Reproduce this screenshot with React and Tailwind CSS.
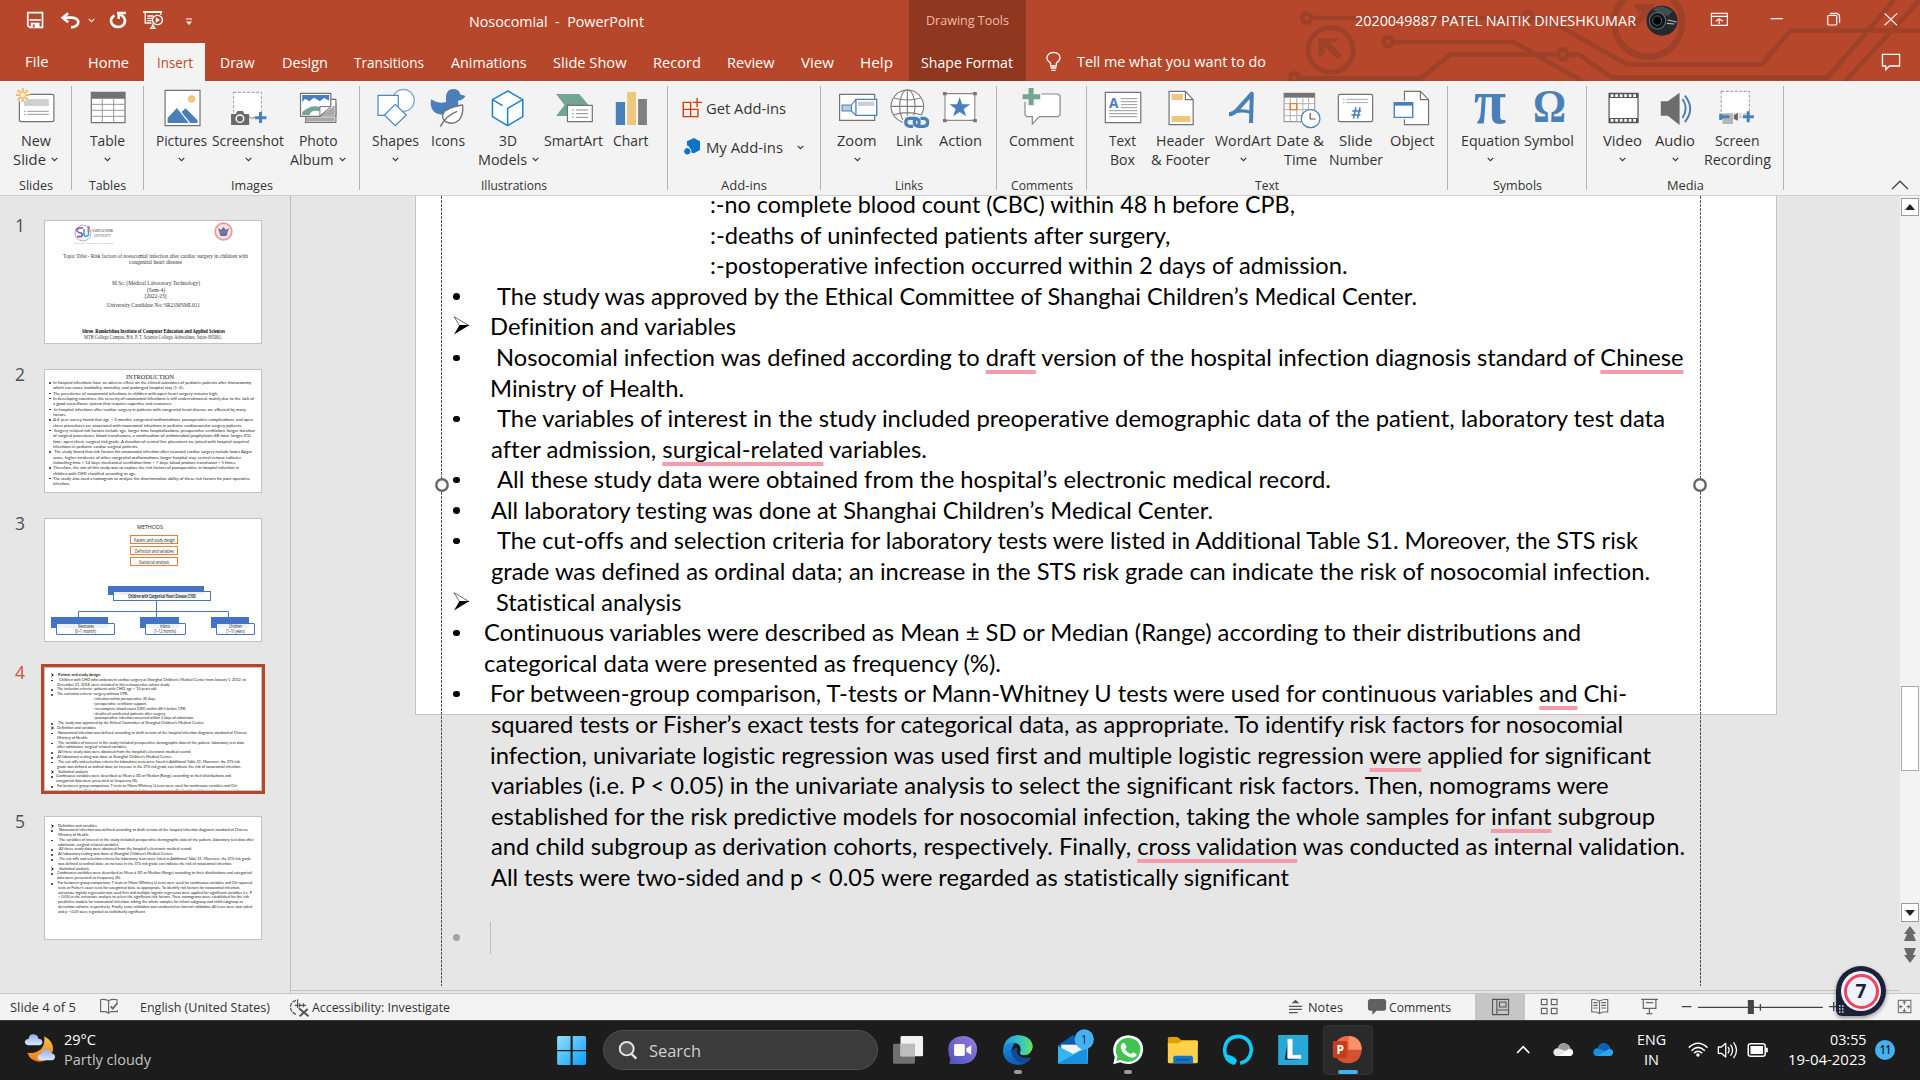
import React, { useLayoutEffect, useRef } from "react";

/* Drawing grids for the icons: [origin x, origin y, horizontal units per pixel]; 3 vertical units per pixel. */
const GRID = {
  a: [0, 0, 2.3758],
  b: [660, 0, 2.45],
  c: [1280, 0, 2.45],
  s: [0, 980, 2.3758],
  k: [540, 980, 1.8667],
  r: [1240, 900, 2.3059],
};

function Icon({ g, x, y, w, h, className = "", children }) {
  const [ox, oy, s] = GRID[g];
  return (
    <svg
      width={w}
      height={h}
      viewBox={`${(x - ox) * s} ${(y - oy) * 3} ${w * s} ${h * 3}`}
      preserveAspectRatio="none"
      fill="none"
      className={"shrink-0 overflow-visible [&_*]:[vector-effect:non-scaling-stroke] " + className}
    >
      {children}
    </svg>
  );
}

/* A run of text set to an exact width. */
function T({ w, className = "", children }) {
  const ref = useRef(null);
  useLayoutEffect(() => {
    const el = ref.current;
    el.style.transform = "none";
    const natural = el.getBoundingClientRect().width;
    if (natural > 0) el.style.transform = `scaleX(${w / natural})`;
  });
  return (
    <span className={"inline-block shrink-0 whitespace-pre text-left " + className} style={{ width: w }}>
      <span ref={ref} className="inline-block origin-left whitespace-pre">{children}</span>
    </span>
  );
}

const Chev = ({ className = "" }) => (
  <svg width="7" height="5" viewBox="0 0 7 5" fill="none" stroke="currentColor" strokeWidth="1.1" className={"shrink-0 " + className}>
    <path d="M.7 .8 3.5 3.6 6.3 .8" />
  </svg>
);

/* ---------- header ---------- */

function Circuit() {
  return (
    <Icon g="c" x={1280} y={0} w={640} h={81} className="absolute right-0 top-0 overflow-hidden!">
      <g stroke="#9d4129" strokeWidth="4.6">
        <ellipse cx="65" cy="54" rx="11" ry="14" />
        <path d="M78 54H590M608 54 650 54 850 193H1180L1250 92H1568" />
        <ellipse cx="608" cy="50" rx="11" ry="13" />
        <ellipse cx="265" cy="125" rx="11" ry="14" />
        <path d="M278 126H572L740 243" />
        <ellipse cx="35" cy="234" rx="11" ry="14" />
        <path d="M48 235H345L418 163H680M706 163H732L812 232H1342L1505 0M1385 243 1568 0" />
        <ellipse cx="693" cy="163" rx="12" ry="15" />
        <ellipse cx="124" cy="150" rx="55" ry="67" strokeWidth="5" />
        <ellipse cx="902" cy="68" rx="83" ry="102" strokeWidth="6.5" />
      </g>
      <path d="M94 115H146L136 127H122L151 165 141 178 110 140V158L94 176Z" fill="#9d4129" />
      <path d="M865 12H916V82L898 65V50L868 90 858 76 886 36H876Z" fill="#9d4129" />
    </Icon>
  );
}

const TABS = [
  ["File", "w-[73px]", 23.5],
  ["Home", "w-[71px]", 41],
  ["Insert", "w-[61px]", 36],
  ["Draw", "w-[64px]", 34.5],
  ["Design", "w-[71px]", 46],
  ["Transitions", "w-[98px]", 70],
  ["Animations", "w-[101px]", 75.5],
  ["Slide Show", "w-[101px]", 73.5],
  ["Record", "w-[73px]", 48],
  ["Review", "w-[75px]", 47.5],
  ["View", "w-[58px]", 33],
  ["Help", "w-[60px]", 33],
];

function Header() {
  return (
    <header className="relative h-[81px] w-full shrink-0 bg-[#b7472a] text-[14px] leading-5 text-white">
      <Circuit />
      <div className="relative flex h-[43px] items-start">
        <div className="flex w-[469px] items-start pl-[23px] pt-2 text-[#fbeae5]">
          <Icon g="a" x={23} y={8} w={24} h={24}>
            <path d="M66 38H101V82H71L66 77Z" stroke="#fff" strokeWidth="1.7" />
            <path d="M70 60H97" stroke="#fff" strokeWidth="1.6" />
            <path d="M73 68H94V83H73Z" fill="#fff" />
            <path d="M78 73H82V83H78Z" fill="#b7472a" />
          </Icon>
          <Icon g="a" x={58} y={8} w={24} h={24} className="ml-[11px]">
            <path d="M150 53H172Q186 55 186 67 185 80 169 82" stroke="#fff" strokeWidth="2.6" />
            <path d="M162 40 149 53 162 67" stroke="#fff" strokeWidth="2.6" />
          </Icon>
          <Chev className="ml-[6px] mt-[10px]" />
          <Icon g="a" x={106} y={8} w={24} h={24} className="ml-[11px]">
            <path d="M272 46Q262 54 264 66 268 81 281 81 296 80 297 62 296 50 286 44" stroke="#fff" strokeWidth="2.6" />
            <path d="M278 39H299M282 39V57" stroke="#fff" strokeWidth="2.4" />
          </Icon>
          <Icon g="a" x={141} y={8} w={24} h={24} className="ml-[11px]">
            <path d="M340 36H385" stroke="#fff" strokeWidth="2" />
            <path d="M345 36V69H360M350 48H364M350 55H361M350 62H360M382 36V44M356 85H370M360 84 363 74 367 84" stroke="#fff" strokeWidth="1.3" />
            <ellipse cx="374" cy="60" rx="12" ry="14" stroke="#fff" strokeWidth="1.4" />
            <path d="M370 52 380 60 370 68Z" fill="#fff" />
          </Icon>
          <svg width="8" height="8" viewBox="0 0 8 8" className="ml-[20px] mt-[10px]">
            <path d="M1 .5H7V1.6H1ZM1 3.6H7L4 7Z" fill="#fff" />
          </svg>
        </div>
        <T w={175} className="mt-[12px]">{"Nosocomial  -  PowerPoint"}</T>
        <div className="ml-auto flex h-full w-[117px] shrink-0 justify-center bg-[#903720]">
          <T w={83} className="mt-[11px] text-[12.5px] text-[#f3b9a8]">Drawing Tools</T>
        </div>
        <div className="flex w-[894px] shrink-0 items-start pl-[329px]">
          <T w={281} className="mt-[11px]">2020049887 PATEL NAITIK DINESHKUMAR</T>
          <Icon g="c" x={1647} y={6} w={31} h={30} className="ml-[11px] mt-[6px]">
            <ellipse cx="936" cy="62" rx="38" ry="45" fill="#23292d" />
            <path d="M912 30Q935 8 962 34L950 48Z" fill="#434c51" />
            <ellipse cx="925" cy="62" rx="20" ry="25" fill="#11161a" stroke="#5e696e" strokeWidth="1.2" />
            <ellipse cx="924" cy="62" rx="11" ry="14" fill="#000" stroke="#566" strokeWidth="1" />
            <path d="M950 60 972 66M948 70 966 72" stroke="#b7bcb6" strokeWidth="1.2" />
          </Icon>
          <Icon g="c" x={1709} y={10} w={21} h={20} className="ml-[31px] mt-[10px]">
            <path d="M1057 40H1096V76H1057ZM1057 49H1096M1076 72V56M1068 64 1076 56 1085 64" stroke="#fff" strokeWidth="1.2" />
          </Icon>
          <Icon g="c" x={1767} y={10} w={20} h={20} className="ml-[37px] mt-[10px]">
            <path d="M1202 56H1232" stroke="#fff" strokeWidth="1.2" />
          </Icon>
          <Icon g="c" x={1823} y={10} w={20} h={20} className="ml-[36px] mt-[10px]">
            <rect x="1342" y="46" width="22" height="29" rx="3" stroke="#fff" strokeWidth="1.2" />
            <path d="M1348 40H1362Q1371 40 1371 52V68" stroke="#fff" strokeWidth="1.2" />
          </Icon>
          <Icon g="c" x={1881} y={10} w={20} h={20} className="ml-[38px] mt-[10px]">
            <path d="M1481 40 1512 76M1512 40 1481 76" stroke="#fff" strokeWidth="1.2" />
          </Icon>
        </div>
      </div>
      <nav className="relative flex h-[38px] items-center">
        {TABS.map(([t, cls, w]) => (
          <div key={t} className={"flex h-full shrink-0 items-center justify-center " + cls + (t === "Insert" ? " bg-[#f3f3f3] text-[#c0482a]" : "")}>
            <T w={w} className={t === "File" ? "-mt-px" : "mt-px"}>{t}</T>
          </div>
        ))}
        <div className="ml-[3px] flex h-full w-[117px] shrink-0 items-center justify-center bg-[#903720]">
          <T w={92} className="-ml-[2px] mt-px">Shape Format</T>
        </div>
        <Icon g="b" x={1044} y={50} w={20} h={24} className="ml-[18px]">
          <path d="M957 198V190Q947 180 948 173 950 158 964 157 979 158 980 173 980 181 971 190V198ZM957 204H971M959 211H969" stroke="#fff" strokeWidth="1.3" />
        </Icon>
        <T w={189} className="-mt-px ml-[13px]">Tell me what you want to do</T>
        <Icon g="c" x={1881} y={50} w={21} h={24} className="ml-auto mr-[18px]">
          <path d="M1476 163H1518V198H1493L1484 209V198H1476Z" stroke="#fff" strokeWidth="1.3" />
        </Icon>
      </nav>
    </header>
  );
}

/* ---------- ribbon ---------- */

const B = "#4a80ba";
const G = "#737373";

const ICONS = {
  newSlide: (
    <>
      <rect x="46" y="283" width="82" height="82" rx="5" fill="#fff" stroke={G} strokeWidth="1.2" />
      <path d="M57 297H116V318H57Z" fill="#d0d0d0" />
      <path d="M57 334H61M65 334H116M57 343H61M65 343H116" stroke="#9a9a9a" strokeWidth="1" />
      <path d="M54 264V304M38 285H71M42 270 66 300M66 270 42 300" stroke="#f3f3f3" strokeWidth="4" />
      <path d="M54 264V279M54 291V306M38 285H49M59 285H71M42 270 50 280M58 290 66 300M66 270 58 280M50 290 42 300" stroke="#eebf68" strokeWidth="2" />
    </>
  ),
  table: (
    <>
      <path d="M217 277H297V368H217Z" fill="#fff" stroke={G} strokeWidth="1.2" />
      <path d="M217 276H297V296H217Z" fill={G} />
      <path d="M217 313H297M217 331H297M217 349H297M243 297V367M270 297V367" stroke="#9b9b9b" strokeWidth="1" />
    </>
  ),
  pictures: (
    <>
      <path d="M391 271H474V377H391Z" fill="#fff" stroke={G} strokeWidth="1.2" />
      <ellipse cx="454" cy="297" rx="9" ry="11" fill="#eec77d" />
      <path d="M397 354 419 324 447 369H397ZM430 336 440 325 468 361V369H451Z" fill={B} />
    </>
  ),
  screenshot: (
    <>
      <path d="M555 277H621V352H555Z" fill="#fff" stroke="#a9a9a9" strokeWidth="1.1" strokeDasharray="3 1.5" />
      <path d="M549 342H560L564 333H577L581 342H592V375H549Z" fill="#6a6a6a" />
      <ellipse cx="570" cy="356" rx="9" ry="11" fill="#6a6a6a" stroke="#fff" strokeWidth="1.4" />
      <path d="M596 355H603" stroke="#999" />
      <path d="M619 336V369M606 353H633" stroke={B} strokeWidth="3" />
    </>
  ),
  album: (
    <>
      <path d="M726 310H798V367H726Z" fill="#fff" stroke={G} strokeWidth="1.1" />
      <path d="M726 352H795V364H726Z" fill="#a8a8a8" />
      <path d="M722 298H798V348H722Z" fill="#fff" stroke={G} strokeWidth="1.1" />
      <path d="M764 346 795 316V346Z" fill="#a8a8a8" />
      <path d="M714 280H786V318L760 349H714Z" fill="#fff" stroke={G} strokeWidth="1.2" />
      <path d="M718 285H782V302L770 294 760 304 746 293 735 304 725 296 718 306Z" fill={B} />
      <path d="M718 336Q740 312 762 322L758 334Q740 328 735 345H718Z" fill="#72a592" />
      <path d="M760 348V320H786Z" fill="#fff" stroke={G} strokeWidth="1" />
    </>
  ),
  shapes: (
    <>
      <ellipse cx="957" cy="301" rx="26" ry="33" fill="#fff" stroke="#7aa3cf" strokeWidth="1.2" />
      <path d="M897 286H945V346H897Z" fill="#fff" stroke="#4a86c8" strokeWidth="1.2" />
      <path d="M938 313 964 345 938 377 912 345Z" fill="#fff" stroke="#4a86c8" strokeWidth="1.2" />
    </>
  ),
  icons: (
    <>
      <path d="M1024 298Q1041 313 1060 306 1056 267 1078 267 1092 268 1093 283L1106 288Q1100 301 1088 302 1093 325 1074 336 1056 350 1036 340 1020 327 1024 298Z" fill={B} />
      <path d="M1099 315Q1102 344 1090 361 1077 376 1058 365 1045 349 1057 333 1072 320 1099 315Z" fill="#fff" stroke={G} strokeWidth="1.3" />
      <path d="M1086 334Q1060 346 1046 380" stroke={G} strokeWidth="1.5" />
    </>
  ),
  models: (
    <path d="M1206 273 1242 299V350L1206 377 1170 350V299ZM1206 377V325L1242 299M1170 299 1194 317" fill="#fff" stroke="#1f7fd0" strokeWidth="1.5" />
  ),
  smartart: (
    <>
      <path d="M1320 282H1375L1397 315 1375 348H1320L1340 315Z" fill="#72a592" />
      <path d="M1347 316H1406V365H1347Z" fill="#fff" stroke={G} strokeWidth="1.2" />
      <path d="M1358 330H1362M1367 330H1396M1358 341H1362M1367 341H1396M1358 352H1362M1367 352H1396" stroke="#8a8a8a" strokeWidth="1" />
    </>
  ),
  chart: (
    <>
      <path d="M1463 306H1485V375H1463Z" fill={B} />
      <path d="M1490 276H1511V375H1490Z" fill="#eec77d" />
      <path d="M1516 297H1537V375H1516Z" fill="#808080" />
    </>
  ),
  zoom: (
    <>
      <path d="M440 283H526V361H440Z" fill="#fff" stroke={G} strokeWidth="1.2" />
      <path d="M446 315H469V333H446ZM469 315 480 298M469 333 480 346" fill="#b9cde3" stroke={B} strokeWidth="1.1" />
      <path d="M480 298H531V346H480Z" fill="#fff" stroke={B} strokeWidth="1.3" />
      <path d="M485 305H525V318H485Z" fill="#cfcfcf" />
    </>
  ),
  link: (
    <>
      <g stroke="#7d7d7d" strokeWidth="1.1">
        <ellipse cx="606" cy="319" rx="40" ry="49" fill="#fff" />
        <ellipse cx="606" cy="319" rx="19" ry="49" />
        <path d="M566 319H646M606 270V368M573 294Q606 306 639 294M573 344Q606 332 639 344" />
      </g>
      <rect x="595" y="346" width="67" height="42" rx="16" fill="#f3f3f3" />
      <g stroke={B} strokeWidth="3.2">
        <path d="M620 379H612Q602 378 602 367 602 355 612 355H625Q635 356 635 367 635 372 633 376" />
        <path d="M638 355H646Q656 356 656 367 656 379 646 379H633Q623 378 623 367 623 362 625 358" />
      </g>
    </>
  ),
  action: (
    <>
      <path d="M697 281H770V361H697Z" fill="#fff" stroke="#8a8a8a" strokeWidth="1.1" />
      <path d="M692 276H701V286H692ZM766 276H775V286H766ZM692 357H701V367H692ZM766 357H775V367H766Z" fill="#777" />
      <path d="M733 291 739 313H759L743 327 749 349 733 336 717 349 723 327 708 313H727Z" fill={B} />
    </>
  ),
  comment: (
    <>
      <path d="M893 282H974L979 288V344L974 350H928L911 372V350H898L893 344Z" fill="#fff" stroke="#8a8a8a" strokeWidth="1.2" />
      <path d="M884 278H933V305H920V318H896V305H884Z" fill="#f3f3f3" />
      <path d="M908 264V315M887 290H930" stroke="#72a592" strokeWidth="5" />
    </>
  ),
  textbox: (
    <>
      <path d="M1091 277H1178V368H1091Z" fill="#fff" stroke={G} strokeWidth="1.2" />
      <text x="1100" y="324" fontSize="40" fontWeight="700" fill={B} textLength="23" lengthAdjust="spacingAndGlyphs">A</text>
      <path d="M1129 296H1169M1129 305H1169M1129 314H1169M1129 323H1169M1100 332H1169M1100 341H1169M1100 350H1169" stroke="#999" strokeWidth="1" />
    </>
  ),
  header: (
    <>
      <path d="M1246 274H1286L1305 299V374H1246Z" fill="#fff" stroke={G} strokeWidth="1.2" />
      <path d="M1286 274V299H1305" stroke={G} strokeWidth="1.2" />
      <path d="M1252 282H1280V300H1252ZM1252 348H1298V366H1252Z" fill="#eec77d" />
    </>
  ),
  wordart: (
    <>
      <path d="M1394 343Q1405 343 1413 331L1450 281 1448 369" stroke={B} strokeWidth="4" strokeLinejoin="round" />
      <path d="M1413 334Q1430 330 1448 337" stroke={B} strokeWidth="3.4" />
    </>
  ),
  date: (
    <>
      <path d="M10 280H85V365H10Z" fill="#fff" stroke="#9a9a9a" strokeWidth="1.1" />
      <path d="M10 279H85V293H10Z" fill={G} />
      <path d="M10 311H85M10 329H85M10 347H85M25 294V364M41 294V364M56 294V364M70 294V364" stroke="#b0b0b0" strokeWidth="1" />
      <path d="M25 311H41V329H25Z" fill="#fff" stroke="#e07b28" strokeWidth="1.4" />
      <ellipse cx="75" cy="356" rx="23" ry="27" fill="#fff" stroke={B} strokeWidth="1.2" />
      <path d="M74 339V357H87" stroke="#555" strokeWidth="1.2" />
    </>
  ),
  slidenum: (
    <>
      <rect x="143" y="283" width="84" height="82" rx="4" fill="#fff" stroke={G} strokeWidth="1.2" />
      <path d="M154 298H158M162 298H216M154 308H158M162 308H216" stroke="#aaa" strokeWidth="1" />
      <path d="M186 322 180 356M196 322 190 356M177 333H199M175 345H197" stroke={B} strokeWidth="1.6" />
    </>
  ),
  object: (
    <>
      <path d="M305 274H344L364 299V374H305Z" fill="#fff" stroke={G} strokeWidth="1.2" />
      <path d="M344 274V299H364" stroke={G} strokeWidth="1.2" />
      <path d="M275 302H331V358H275Z" fill="#f3f3f3" />
      <path d="M280 308H325V352H280Z" fill="#fff" stroke={B} strokeWidth="1.4" />
      <path d="M280 307H325V317H280Z" fill={B} />
    </>
  ),
  video: (
    <>
      <path d="M805 280H876V368H805Z" fill="#fff" stroke="#555" strokeWidth="1.2" />
      <path d="M805 280H876V294H805ZM805 354H876V368H805Z" fill="#555" />
      <path d="M809 287H874M809 361H874" stroke="#fff" strokeWidth="2.6" strokeDasharray="2.8 1.7" />
    </>
  ),
  audio: (
    <>
      <path d="M933 304H950L979 278V375L950 347H933Z" fill="#6d6d6d" />
      <path d="M986 297Q1002 324 986 354M992 287Q1018 327 992 366" stroke={B} strokeWidth="2" />
    </>
  ),
  screenrec: (
    <>
      <path d="M1081 274H1150V342H1081Z" fill="#fff" stroke="#a9a9a9" strokeWidth="1.1" strokeDasharray="3 1.5" />
      <path d="M1084 340H1110V372H1084Z" fill="#b5b5b5" />
      <path d="M1076 341H1081L1086 346H1101V355H1086L1081 360H1076Z" fill={B} />
      <path d="M1112 346 1122 339V362L1112 357Z" fill="#666" />
      <path d="M1125 351H1131" stroke="#999" />
      <path d="M1147 334V367M1134 350H1161" stroke={B} strokeWidth="3" />
    </>
  ),
};

const GROUPS = [
  { n: "Slides", nw: 34, cls: "w-[72px]", pad: "", items: [["newSlide", "a", 36, "w-[71px]", ["New", 30], ["Slide", 33], "side"]] },
  { n: "Tables", nw: 37, cls: "w-[72px]", pad: "", items: [["table", "a", 108, "w-[71px]", ["Table", 35], null, "down"]] },
  {
    n: "Images", nw: 42, cls: "w-[216px]", pad: "pl-2",
    items: [
      ["pictures", "a", 181.5, "w-[59px]", ["Pictures", 51], null, "down"],
      ["screenshot", "a", 248, "w-[74px]", ["Screenshot", 72], null, "down"],
      ["album", "a", 318, "w-[66px]", ["Photo", 38.5], ["Album", 43.5], "side"],
    ],
  },
  {
    n: "Illustrations", nw: 66, cls: "w-[308px]", pad: "pl-[7px]",
    items: [
      ["shapes", "a", 395.5, "w-[57px]", ["Shapes", 47], null, "down"],
      ["icons", "a", 448, "w-[48px]", ["Icons", 34], null, ""],
      ["models", "a", 508, "w-[72px]", ["3D", 18], ["Models", 49], "side"],
      ["smartart", "a", 573.5, "w-[59px]", ["SmartArt", 59], null, ""],
      ["chart", "a", 631, "w-[56px]", ["Chart", 35.5], null, ""],
    ],
  },
  { n: "Add-ins", nw: 46, cls: "w-[153px]", addins: true },
  {
    n: "Links", nw: 28, cls: "w-[176px]", pad: "pl-2",
    items: [
      ["zoom", "b", 857, "w-[56px]", ["Zoom", 39.5], null, "down"],
      ["link", "b", 909, "w-[48px]", ["Link", 26.5], null, ""],
      ["action", "b", 960.5, "w-[55px]", ["Action", 43], null, ""],
    ],
  },
  { n: "Comments", nw: 62, cls: "w-[90px]", pad: "", items: [["comment", "b", 1041.5, "w-[89px]", ["Comment", 65], null, ""]] },
  {
    n: "Text", nw: 24, cls: "w-[361px]", pad: "pl-[10px]",
    items: [
      ["textbox", "b", 1122, "w-[50px]", ["Text", 27], ["Box", 25], ""],
      ["header", "b", 1180.5, "w-[67px]", ["Header", 48.5], ["& Footer", 59], ""],
      ["wordart", "b", 1243, "w-[58px]", ["WordArt", 56], null, "down"],
      ["date", "c", 1300, "w-[56px]", ["Date &", 48], ["Time", 33], ""],
      ["slidenum", "c", 1356, "w-[56px]", ["Slide", 33.5], ["Number", 54], ""],
      ["object", "c", 1412, "w-[56px]", ["Object", 44.5], null, ""],
    ],
  },
  {
    n: "Symbols", nw: 49, cls: "w-[139px]", pad: "pl-[10px]",
    items: [
      ["π", "c", 1490, "w-[64px]", ["Equation", 59], null, "down"],
      ["Ω", "c", 1549, "w-[54px]", ["Symbol", 50], null, ""],
    ],
  },
  {
    n: "Media", nw: 37, cls: "w-[197px]", pad: "pl-2",
    items: [
      ["video", "c", 1622.5, "w-[55px]", ["Video", 39], null, "down"],
      ["audio", "c", 1675, "w-[50px]", ["Audio", 40], null, "down"],
      ["screenrec", "c", 1737, "w-[74px]", ["Screen", 44.5], ["Recording", 67], ""],
    ],
  },
];

function RibbonItem({ d }) {
  const [name, g, c, cls, l1, l2, chev] = d;
  return (
    <div className={"flex shrink-0 flex-col items-center pt-[2px] " + cls}>
      {ICONS[name] ? (
        <Icon g={g} x={c - 20} y={88} w={40} h={40}>{ICONS[name]}</Icon>
      ) : (
        <div className="flex h-10 items-center justify-center overflow-visible font-['Liberation_Serif',serif] font-bold text-[#4a80ba]">
          {name === "π" ? (
            <T w={32} className="-mt-[13px] text-[64px] leading-10">π</T>
          ) : (
            <T w={33} className="-mt-[5px] text-[47px] leading-10">Ω</T>
          )}
        </div>
      )}
      <T w={l1[1]} className="mt-[3px] leading-5">{l1[0]}</T>
      <div className="-mt-px flex h-5 items-center justify-center whitespace-nowrap leading-5">
        {l2 && <T w={l2[1]}>{l2[0]}</T>}
        {chev === "side" && <Chev className="ml-[5px] -mt-[1px]" />}
        {chev === "down" && <Chev className="-mt-[2px]" />}
      </div>
    </div>
  );
}

function AddIns() {
  return (
    <div className="flex h-[93px] shrink-0 flex-col pl-[12px] pt-[12px]">
      <div className="flex h-5 items-center">
        <Icon g="b" x={680} y={97} w={24} h={22}>
          <path d="M57 307H75V350H57ZM57 328H93V350H57M75 328V350M93 328V350" stroke="#d83b01" strokeWidth="1.4" />
          <path d="M91 294V321M80 307H103" stroke="#d83b01" strokeWidth="1.4" />
        </Icon>
        <T w={80} className="ml-[2px]">Get Add-ins</T>
      </div>
      <div className="mt-[19px] flex h-5 items-center">
        <Icon g="b" x={680} y={136} w={24} h={22}>
          <path d="M83 414 98 424V450L83 460 72 456V440L66 436V424Z" fill="#0a72c7" />
          <ellipse cx="67" cy="454" rx="9" ry="11" fill="#0a72c7" stroke="#f3f3f3" strokeWidth="1" />
        </Icon>
        <T w={77} className="ml-[2px]">My Add-ins</T>
        <Chev className="ml-[14px]" />
      </div>
    </div>
  );
}

function Ribbon() {
  return (
    <div className="flex h-[115px] shrink-0 border-b border-[#cfcfcf] bg-[#f3f3f3] pt-[5px] text-[14px] text-[#333]">
      {GROUPS.map((gr) => (
        <section key={gr.n} className={"flex h-[104px] shrink-0 flex-col border-r border-[#b4b4b4] " + gr.cls}>
          {gr.addins ? <AddIns /> : (
            <div className={"flex h-[93px] shrink-0 " + gr.pad}>
              {gr.items.map((d) => <RibbonItem key={d[0]} d={d} />)}
            </div>
          )}
          <div className="flex h-[14px] shrink-0 items-start justify-center text-[12.5px] leading-[14px]">
            <T w={gr.nw}>{gr.n}</T>
          </div>
        </section>
      ))}
      <svg width="18" height="10" viewBox="0 0 18 10" fill="none" stroke="#444" strokeWidth="1.3" className="ml-auto mr-[11px] mt-[94px]">
        <path d="M1 9 9 1.2 17 9" />
      </svg>
    </div>
  );
}

/* ---------- thumbnails ---------- */

function Lines({ lines, font, pitch }) {
  return lines.map(([x, w, t, b], i) => (
    <div key={i} className={"flex whitespace-pre " + font + " " + pitch}>
      <span className="w-[12px] shrink-0 pl-[6px]">
        {b === 1 && <span className="mt-[2px] block h-[1.500px] w-[1.500px] rounded-full bg-[#222]" />}
        {b === 2 && <svg width="3" height="4" viewBox="0 0 3 4" className="block"><path d="M0 0 3 2 0 4 1 2Z" fill="#111" /></svg>}
      </span>
      <span style={{ marginLeft: x - 12 }}><T w={w} className={t === "Patient and study design:" ? "font-bold" : ""}>{t}</T></span>
    </div>
  ));
}

const INTRO = [
  [10, 199, "In-hospital infections have an adverse effect on the clinical outcomes of pediatric patients after thoracotomy,", 1],
  [10, 131, "which can cause morbidity, mortality, and prolonged hospital stay [1–4]."],
  [10, 165, "The prevalence of nosocomial infections in children with open-heart surgery remains high.", 1],
  [10, 201, "In developing countries, the severity of nosocomial infections is still underestimated, mainly due to the lack of", 1],
  [10, 119, "a good surveillance system that requires expertise and resources."],
  [11, 192, "In-hospital infections after cardiac surgery in patients with congenital heart disease are affected by many", 1],
  [10, 13, "factors."],
  [10, 200, "A 4-year survey found that age < 2 months, congenital malformations, postoperative complications, and open", 1],
  [10, 189, "chest procedures are associated with nosocomial infections in pediatric cardiovascular surgery patients."],
  [11, 201, "Surgery-related risk factors include age, longer time hospitalizations, preoperative ventilation, longer duration", 1],
  [10, 198, "of surgical procedures, blood transfusions, a continuation of antimicrobial prophylaxis>48 hour, longer ICU"],
  [10, 196, "time, open chest, surgical risk grade. A duration of central line placement are joined with hospital-acquired"],
  [10, 85, "infections in pediatric cardiac surgical patients."],
  [11, 198, "The study found that risk factors for nosocomial infection after neonatal cardiac surgery include lower Apgar", 1],
  [10, 188, "score, higher incidence of other congenital malformations, longer hospital stay, central venous catheter"],
  [10, 183, "indwelling time > 14 days, mechanical ventilation time > 7 days, blood product transfusion > 5 times."],
  [10, 186, "Therefore, the aim of this study was to explore the risk factors of postoperative in-hospital infection in", 1],
  [10, 83, "children with CHD classified according to age."],
  [10, 197, "The study also used a nomogram to analyze the discrimination ability of these risk factors for post-operative", 1],
  [10, 17, "infection."],
];

const METHODS_TEXT = [
  [13, 43, "Patient and study design:", 2],
  [14, 187, "Children with CHD who underwent cardiac surgery at Shanghai Children’s Medical Center from January 1, 2012, to", 1],
  [12, 113, "December 31, 2018, were included in this retrospective cohort study."],
  [12, 100, "The inclusion criteria:- patients with CHD, age < 10 years old.", 1],
  [12, 71, "The exclusion criteria:-surgery without CPB,", 1],
  [48, 63, ":-infection within preoperative 30 days,"],
  [48, 54, ":-preoperative ventilator support,"],
  [48, 93, ":-no complete blood count (CBC) within 48 h before CPB,"],
  [48, 73, ":-deaths of uninfected patients after surgery,"],
  [48, 101, ":-postoperative infection occurred within 2 days of admission."],
  [13, 146, "The study was approved by the Ethical Committee of Shanghai Children’s Medical Center.", 1],
  [12, 39, "Definition and variables", 2],
  [13, 189, "Nosocomial infection was defined according to draft version of the hospital infection diagnosis standard of Chinese", 1],
  [12, 31, "Ministry of Health."],
  [13, 186, "The variables of interest in the study included preoperative demographic data of the patient, laboratory test data", 1],
  [12, 70, "after admission, surgical-related variables."],
  [13, 133, "All these study data were obtained from the hospital’s electronic medical record.", 1],
  [12, 115, "All laboratory testing was done at Shanghai Children’s Medical Center.", 1],
  [13, 182, "The cut-offs and selection criteria for laboratory tests were listed in Additional Table S1. Moreover, the STS risk", 1],
  [12, 184, "grade was defined as ordinal data; an increase in the STS risk grade can indicate the risk of nosocomial infection."],
  [13, 30, "Statistical analysis", 2],
  [11, 175, "Continuous variables were described as Mean ± SD or Median (Range) according to their distributions and", 1],
  [11, 82, "categorical data were presented as frequency (%)."],
  [12, 181, "For between-group comparison, T-tests or Mann-Whitney U tests were used for continuous variables and Chi-", 1],
  [12, 181, "squared tests or Fisher’s exact tests for categorical data, as appropriate. To identify risk factors for nosocomial"],
];

const LAST_TEXT = [
  [13, 39, "Definition and variables", 2],
  [14, 189, "Nosocomial infection was defined according to draft version of the hospital infection diagnosis standard of Chinese", 1],
  [13, 31, "Ministry of Health."],
  [14, 195, "The variables of interest in the study included preoperative demographic data of the patient, laboratory test data after", 1],
  [13, 61, "admission, surgical-related variables."],
  [14, 133, "All these study data were obtained from the hospital’s electronic medical record.", 1],
  [13, 115, "All laboratory testing was done at Shanghai Children’s Medical Center.", 1],
  [14, 192, "The cut-offs and selection criteria for laboratory tests were listed in Additional Table S1. Moreover, the STS risk grade", 1],
  [13, 174, "was defined as ordinal data; an increase in the STS risk grade can indicate the risk of nosocomial infection."],
  [14, 30, "Statistical analysis", 2],
  [12, 195, "Continuous variables were described as Mean ± SD or Median (Range) according to their distributions and categorical", 1],
  [12, 64, "data were presented as frequency (%)."],
  [13, 194, "For between-group comparison, T-tests or Mann-Whitney U tests were used for continuous variables and Chi-squared", 1],
  [13, 182, "tests or Fisher’s exact tests for categorical data, as appropriate. To identify risk factors for nosocomial infection,"],
  [13, 194, "univariate logistic regression was used first and multiple logistic regression were applied for significant variables (i.e. P"],
  [13, 191, "< 0.05) in the univariate analysis to select the significant risk factors. Then, nomograms were established for the risk"],
  [13, 185, "predictive models for nosocomial infection, taking the whole samples for infant subgroup and child subgroup as"],
  [13, 194, "derivation cohorts, respectively. Finally, cross validation was conducted as internal validation. All tests were two-sided"],
  [13, 87, "and p < 0.05 were regarded as statistically significant"],
];

function Thumb1() {
  return (
    <div className="flex h-full flex-col items-center font-['Liberation_Serif',serif] text-[#333]">
      <div className="flex w-full items-start justify-between pl-[29px] pr-[28px] pt-[1px]">
        <div className="mt-[2px] flex flex-col">
          <div className="flex items-center">
            <svg width="18" height="18" viewBox="0 0 18 18" fill="none">
              <circle cx="9" cy="9" r="8" stroke="#a9b3c2" strokeWidth="1" />
              <path d="M9 4H5Q2.500 4.500 3 7 4 9 7 9 9 10 8 12 6 13 3 12.500" stroke="#8a4bb8" strokeWidth="1.6" />
              <path d="M10 5V11Q12 14 14.500 11V2" stroke="#3aa9c9" strokeWidth="1.6" />
              <path d="M14.500 2V8" stroke="#e2607c" strokeWidth="1.6" />
            </svg>
            <div className="flex flex-col text-[4.200px] leading-[5px] text-[#666]">
              <T w={21} className="font-bold">SARVAJANIK</T>
              <T w={17} className="ml-[2px]">UNIVERSITY</T>
            </div>
          </div>
          <T w={40} className="text-[2.500px] leading-[4px] text-[#777]">INCLUSIVE | INTEGRATED | INNOVATIVE</T>
        </div>
        <svg width="19" height="19" viewBox="0 0 19 19">
          <circle cx="9.500" cy="9.500" r="8.400" fill="#f8e2e2" stroke="#e79a96" strokeWidth="1.600" />
          <path d="M4 6 7 8 9.500 5 12 8 15 6 12.500 14H6.500Z" fill="#5f6fa8" />
          <path d="M6 10H13" stroke="#d9706c" />
        </svg>
      </div>
      <div className="ml-[5px] mt-[7px] flex flex-col items-center text-[5.500px] leading-[6px]">
        <T w={185}>Topic Title:- Risk factors of nosocomial infection after cardiac surgery in children with</T>
        <T w={53}>congenital heart disease</T>
      </div>
      <div className="ml-[5px] mt-[15px] flex flex-col items-center text-[5.500px] leading-[6.500px]">
        <T w={88}>M.Sc. (Medical Laboratory Technology)</T>
        <T w={18}>(Sem-4)</T>
        <T w={22}>[2022-23]</T>
        <T w={93} className="mt-[2.500px] -ml-[5px]">University Candidate No: SR21MSML011</T>
      </div>
      <div className="mt-[19px] flex flex-col items-center text-[5.500px] leading-[6px]">
        <T w={143} className="font-bold text-black">Shree  Ramkrishna Institute of Computer Education and Applied Sciences</T>
        <T w={138}>MTB College Campus, B/h. P. T. Science College, Athwalines, Surat-395001,</T>
      </div>
    </div>
  );
}

function Thumb3() {
  const box = (cls, w1, t1, w2, t2, cls2) => (
    <div className={"relative h-[18px] " + cls}>
      <div className={"h-[11px] bg-[#4472c4] " + cls2} />
      <div className="absolute bottom-0 left-[5px] right-0 flex h-[12px] flex-col items-center justify-center rounded-[1px] border border-[#4472c4] bg-white/90 text-[4.500px] leading-[5px]">
        <T w={w1}>{t1}</T>
        <T w={w2}>{t2}</T>
      </div>
    </div>
  );
  return (
    <div className="flex h-full flex-col items-center text-[#222]">
      <T w={26} className="-ml-[6px] mt-[5px] text-[6px] leading-[6px]">METHODS</T>
      <div className="ml-[2px] mt-[5px] flex flex-col gap-[2px] text-[4.500px] leading-[4px]">
        {[["Patient and study design", 41], ["Definition and variables", 39], ["Statistical analysis", 30]].map(([t, w]) => (
          <div key={t} className="flex h-[9px] w-[48px] items-center justify-center border border-[#ed7d31]">
            <T w={w}>{t}</T>
          </div>
        ))}
      </div>
      <div className="relative ml-[13px] mt-[20px] h-[15px] w-[103px]">
        <div className="h-[9px] w-[96px] bg-[#4472c4]" />
        <div className="absolute bottom-0 right-0 flex h-[10px] w-[98px] items-center justify-center border border-[#4472c4] bg-white/90 text-[4.500px] font-bold leading-[4px]">
          <T w={68}>Children with Congenital Heart Disease (CHD)</T>
        </div>
      </div>
      <svg width="216" height="16" viewBox="0 0 216 16" fill="none" stroke="#4472c4" strokeWidth="1" className="shrink-0">
        <path d="M111.500 0V16M33.500 16V10.500H183.500V16" />
      </svg>
      <div className="flex w-[204px] justify-between">
        {box("w-[64px]", 16, "Neonates", 21, "(0–1 month)", "w-[57px]")}
        {box("-ml-px w-[46px]", 10, "Infants", 22, "(1–12 months)", "w-[39px]")}
        {box("w-[44px]", 13, "Children", 19, "(1–10 years)", "w-[38px]")}
      </div>
    </div>
  );
}

function Panel() {
  const frames = [
    <Thumb1 />,
    <div className="pt-[4px] font-['Lato',sans-serif] text-[#222]">
      <div className="flex justify-center pr-[6px] font-['Liberation_Serif',serif] text-[6px] leading-[6px]"><T w={48}>INTRODUCTION</T></div>
      <div className="-ml-[2px]"><Lines lines={INTRO} font="text-[4.200px]" pitch="leading-[5.330px]" /></div>
    </div>,
    <Thumb3 />,
    <div className="pt-[5px] font-['Lato',sans-serif] text-[#222]"><Lines lines={METHODS_TEXT} font="text-[3.900px]" pitch="leading-[4.830px]" /></div>,
    <div className="pt-[6.500px] font-['Lato',sans-serif] text-[#222]"><Lines lines={LAST_TEXT} font="text-[3.900px]" pitch="leading-[4.800px]" /></div>,
  ];
  return (
    <aside className="flex w-[291px] shrink-0 flex-col gap-[25px] border-r border-[#bdbdbd] pt-6">
      {frames.map((f, i) => (
        <div key={i} className="flex h-[124px] shrink-0">
          <div className={"-mt-[2px] w-[44px] shrink-0 pl-[15px] text-[18.500px] leading-[14px] " + (i === 3 ? "text-[#d0502f]" : "text-[#505050]")}>
            <T w={10}>{i + 1}</T>
          </div>
          <div className={"h-[124px] w-[218px] overflow-hidden border border-[#c3c3c3] bg-white " + (i === 3 ? "ring-[3px] ring-[#b7472a]" : "")}>{f}</div>
        </div>
      ))}
    </aside>
  );
}

/* ---------- slide ---------- */

const U = ({ children }) => (
  <span className="underline decoration-[#f49cab] decoration-[4px] underline-offset-[4px] [text-decoration-skip-ink:none]">{children}</span>
);

const BODY = [
  ["", 710, 585, ":-no complete blood count (CBC) within 48 h before CPB,"],
  ["", 710, 460.5, ":-deaths of uninfected patients after surgery,"],
  ["", 710, 637.5, ":-postoperative infection occurred within 2 days of admission."],
  ["•", 496.5, 920, "The study was approved by the Ethical Committee of Shanghai Children’s Medical Center."],
  [">", 490, 246, "Definition and variables"],
  ["•", 496, 1187.5, <>Nosocomial infection was defined according to <U>draft</U> version of the hospital infection diagnosis standard of <U>Chinese</U></>],
  ["", 490, 194, "Ministry of Health."],
  ["•", 496.5, 1168, "The variables of interest in the study included preoperative demographic data of the patient, laboratory test data"],
  ["", 490.5, 436, <>after admission, <U>surgical-related</U> variables.</>],
  ["•", 496.5, 834, "All these study data were obtained from the hospital’s electronic medical record."],
  ["•", 490.5, 722, "All laboratory testing was done at Shanghai Children’s Medical Center."],
  ["•", 496.5, 1141, "The cut-offs and selection criteria for laboratory tests were listed in Additional Table S1. Moreover, the STS risk"],
  ["", 490.5, 1159, "grade was defined as ordinal data; an increase in the STS risk grade can indicate the risk of nosocomial infection."],
  [">", 496, 185.5, "Statistical analysis"],
  ["•", 483.5, 1097, "Continuous variables were described as Mean ± SD or Median (Range) according to their distributions and"],
  ["", 483.5, 517, "categorical data were presented as frequency (%)."],
  ["•", 490, 1137, <>For between-group comparison, T-tests or Mann-Whitney U tests were used for continuous variables <U>and</U> Chi-</>],
  ["", 490.5, 1132, "squared tests or Fisher’s exact tests for categorical data, as appropriate. To identify risk factors for nosocomial"],
  ["", 490, 1161, <>infection, univariate logistic regression was used first and multiple logistic regression <U>were</U> applied for significant</>],
  ["", 490.5, 1117.5, "variables (i.e. P < 0.05) in the univariate analysis to select the significant risk factors. Then, nomograms were"],
  ["", 490.5, 1164, <>established for the risk predictive models for nosocomial infection, taking the whole samples for <U>infant</U> subgroup</>],
  ["", 490.5, 1194, <>and child subgroup as derivation cohorts, respectively. Finally, <U>cross validation</U> was conducted as internal validation.</>],
  ["", 490.5, 798, "All tests were two-sided and p < 0.05 were regarded as statistically significant"],
];

function Canvas() {
  return (
    <main className="relative h-[795px] w-[1609px] shrink-0 overflow-hidden border-b border-[#c3c3c3]">
      {/* slide sheet lying under the oversized text box */}
      <div className="absolute -top-[10px] left-[124px] h-[529px] w-[1362px] border border-[#c3c3c3] bg-white" />
      <div className="absolute left-[150px] top-0 h-[790px] w-[1259px]">
        <div className="-mt-[5.900px] font-['Lato',sans-serif] text-[22.600px] leading-[30.580px] text-black [font-variant-ligatures:none]">
          {BODY.map(([b, x, w, t], i) => (
            <div key={i} className="flex h-[30.580px]">
              <span className="flex w-[42px] shrink-0 items-start pl-[12px]">
                {b === "•" && <span className="mt-[11.500px] h-[6.500px] w-[6.500px] rounded-full bg-black" />}
                {b === ">" && (
                  <svg width="17" height="19" viewBox="0 0 17 19" className="mt-[4px]">
                    <path d="M1 .7 16 9.500 6.500 9.500Z" fill="#fff" stroke="#333" strokeWidth=".7" />
                    <path d="M6.500 9H16.500L1 18.500Z" fill="#000" />
                  </svg>
                )}
              </span>
              <span style={{ marginLeft: x - 483 }}><T w={w}>{t}</T></span>
            </div>
          ))}
          <div className="flex pl-[12px] pt-[29px]">
            <span className="mt-[12px] h-[7px] w-[7px] rounded-full bg-[#a3a3a3]" />
            <span className="ml-[30px] h-[32px] w-px bg-[#bdbdbd]" />
          </div>
        </div>
        <svg width="1259" height="790" className="absolute left-0 top-0 overflow-visible" fill="none" stroke="#555">
          <path d="M.5 0V790M1259.500 0V790" strokeDasharray="3 1" />
          <ellipse cx="1" cy="289" rx="5.700" ry="5.700" strokeWidth="2.400" fill="#fff" stroke="#666" />
          <ellipse cx="1259" cy="289" rx="5.700" ry="5.700" strokeWidth="2.400" fill="#fff" stroke="#666" />
        </svg>
      </div>
    </main>
  );
}

function Scrollbar() {
  return (
    <div className="flex w-5 shrink-0 flex-col items-center">
      <div className="flex h-[726px] w-full flex-col items-center bg-[#f3f3f3] pt-[2px]">
        <div className="flex h-[18px] w-[18px] items-center justify-center border border-[#9a9a9a] bg-white">
          <svg width="10" height="6" viewBox="0 0 10 6"><path d="M5 0 10 6H0Z" fill="#222" /></svg>
        </div>
        <div className="mt-[470px] h-[85px] w-[18px] border border-[#ababab] bg-white" />
        <div className="mt-auto flex h-[19px] w-[18px] items-center justify-center border border-[#9a9a9a] bg-white">
          <svg width="10" height="6" viewBox="0 0 10 6"><path d="M5 6 10 0H0Z" fill="#222" /></svg>
        </div>
      </div>
      <svg width="14" height="16" viewBox="0 0 14 16" className="mt-[4px] shrink-0"><path d="M7 0 13 8H10L13 15H1L4 8H1Z" fill="#696969" /></svg>
      <svg width="14" height="16" viewBox="0 0 14 16" className="mt-[5px] shrink-0"><path d="M7 16 13 8H10L13 1H1L4 8H1Z" fill="#696969" /></svg>
    </div>
  );
}

/* ---------- status bar ---------- */

function StatusBar() {
  return (
    <footer className="relative flex h-[27px] shrink-0 items-center border-t border-[#c6c6c6] bg-[#f3f3f3] text-[12px] leading-4 text-[#333]">
      <T w={66} className="ml-[10px] mt-[2px]">Slide 4 of 5</T>
      <Icon g="s" x={98} y={997} w={22} h={20} className="ml-[22px]">
        <path d="M258 62Q248 56 239 59V95H252L258 100 263 95H279V90M258 62V97M258 62Q266 56 278 59V68" stroke="#666" strokeWidth="1.1" />
        <path d="M263 79 268 86 279 69" stroke="#666" strokeWidth="1.800" />
      </Icon>
      <T w={130} className="ml-[20px] mt-[2px]">English (United States)</T>
      <Icon g="s" x={288} y={997} w={22} h={20} className="ml-[18px]">
        <path d="M703 61Q690 66 690 82 691 96 703 103" stroke="#555" strokeWidth="1.200" strokeDasharray="4 1" />
        <path d="M707 58V84M700 76H727M712 70V82M721 70V82" stroke="#555" strokeWidth="1.200" />
        <path d="M710 85 733 109M731 87 712 109" stroke="#555" strokeWidth="2" />
      </Icon>
      <T w={138} className="ml-[2px] mt-[2px]">Accessibility: Investigate</T>
      <div className="ml-auto flex h-full items-center">
        <Icon g="r" x={1287} y={997} w={17} h={20}>
          <path d="M128 299 137 310H119Z" fill="#555" />
          <path d="M113 319H143M113 328H143M113 338H133" stroke="#555" strokeWidth="1.100" />
        </Icon>
        <T w={35} className="ml-[4px] mt-[2px]">Notes</T>
        <Icon g="r" x={1367} y={997} w={20} h={20} className="ml-[24px]">
          <path d="M299 297H333L337 302V328L333 332H315L305 344V332H299L295 328V302Z" fill="#606060" />
        </Icon>
        <T w={62} className="ml-[2px] mt-[2px]">Comments</T>
        <div className="ml-[24px] flex h-full w-[50px] items-center justify-center bg-[#c6c6c6]">
          <Icon g="r" x={1490} y={997} w={19} h={20}>
            <path d="M580 298H617V344H580ZM590 298V344M590 330H617M596 306H611V321H596Z" stroke="#555" strokeWidth="1.100" />
          </Icon>
        </div>
        <Icon g="r" x={1540} y={997} w={19} h={20} className="ml-[15px]">
          <path d="M695 298H708V314H695ZM718 298H731V314H718ZM695 325H708V341H695ZM718 325H731V341H718Z" stroke="#666" strokeWidth="1.200" />
        </Icon>
        <Icon g="r" x={1590} y={997} w={19} h={20} className="ml-[31px]">
          <path d="M829 303Q818 297 811 299V336H822L829 341 836 336H848V299Q838 297 829 303V341M815 308H825M815 316H825M815 324H825M833 308H844M833 316H844M833 324H844" stroke="#666" strokeWidth="1.100" />
        </Icon>
        <Icon g="r" x={1640} y={997} w={19} h={20} className="ml-[31px]">
          <path d="M925 298H964M930 298V325H959V298M936 308H953M944 325V340M937 341H951" stroke="#666" strokeWidth="1.200" />
        </Icon>
        <Icon g="r" x={1680} y={997} w={160} h={20} className="ml-[21px]">
          <path d="M1019 320H1041M1056 322H1344M1200 312V332M1358 320H1380M1369 306V334" stroke="#444" strokeWidth="1.300" />
          <path d="M1171 300H1185V342H1171Z" fill="#444" />
        </Icon>
        <Icon g="r" x={1896} y={997} w={17} h={20} className="ml-[56px] mr-[7px]">
          <path d="M1518 301H1547V338H1518ZM1532 304V314M1532 325V335M1521 320H1528M1537 320H1544M1528 308 1532 304 1536 308M1528 331 1532 335 1536 331M1524 315 1521 320 1524 325M1541 315 1544 320 1541 325" stroke="#777" strokeWidth="1.100" />
        </Icon>
      </div>
      <div className="absolute -top-[28px] right-[34px] flex h-[50px] w-[50px] items-center justify-center rounded-[25px] rounded-bl-[6px] bg-[#1b2238] shadow-[0_2px_4px_rgba(0,0,0,.4)]">
        <div className="flex h-[40px] w-[40px] items-center justify-center rounded-full bg-[#f1f3fc]">
          <div className="flex h-[35px] w-[35px] items-center justify-center rounded-full border-[3px] border-[#f0415d] text-[19px] font-bold text-[#1b2238]">7</div>
        </div>
        <svg width="7" height="9" viewBox="0 0 7 9" className="absolute bottom-[2px] left-[2px]">
          <path d="M1 1H2.500M4 1H5.500M1 4H2.500M4 4H5.500M1 7H2.500M4 7H5.500" stroke="#dfe3f5" strokeWidth="1.300" />
        </svg>
      </div>
    </footer>
  );
}

/* ---------- taskbar ---------- */

function Taskbar() {
  return (
    <div className="flex h-[60px] shrink-0 items-start border-t border-[#3a3a3a] bg-[#1c1c1c] text-[14px] leading-5 text-white">
      <Icon g="s" x={24} y={1032} w={32} h={32} className="ml-[24px] mt-[11px]">
        <defs>
          <linearGradient id="moon" x1="0" y1="0" x2="0" y2="1"><stop stopColor="#f5c542" /><stop offset="1" stopColor="#ee7a1c" /></linearGradient>
          <linearGradient id="cl" x1="0" y1="0" x2="0" y2="1"><stop stopColor="#8fb0e8" /><stop offset="1" stopColor="#dbe8fb" /></linearGradient>
        </defs>
        <path d="M105 169Q128 184 126 211 120 244 94 245 72 244 65 218 84 222 97 208 108 193 105 169Z" fill="url(#moon)" />
        <path d="M67 196Q58 193 59 184 61 176 68 176 70 162 80 163 90 164 91 176 100 176 101 186 100 195 93 196Z" fill="url(#cl)" />
        <path d="M96 241Q88 238 89 230 91 222 97 222 100 208 110 208 119 209 121 220 130 221 131 230 130 240 123 241Z" fill="url(#cl)" />
      </Icon>
      <div className="ml-[8px] mt-[9px] flex w-[90px] flex-col">
        <T w={32}>29°C</T>
        <T w={87} className="text-[#c4c4c4]">Partly cloudy</T>
      </div>
      <Icon g="k" x={556} y={1035} w={31} h={31} className="ml-[402px] mt-[14px]">
        <defs><linearGradient id="win" x1="0" y1="0" x2="1" y2="1"><stop stopColor="#8fe3fd" /><stop offset="1" stopColor="#0a9cf8" /></linearGradient></defs>
        <path d="M34 168H57V210H32V171ZM61 168H84L86 171V210H61ZM32 214H57V255H34L32 252ZM61 214H86V252L84 255H61Z" fill="url(#win)" />
      </Icon>
      <div className="ml-[16px] mt-[9px] flex h-[40px] w-[275px] items-center rounded-full border border-[#505050] bg-[#3b3b3b] pl-[14px]">
        <Icon g="k" x={617} y={1039} w={20} h={22}>
          <ellipse cx="160" cy="206" rx="13" ry="20" stroke="#e8e8e8" strokeWidth="1.900" fill="#5a5a5a" />
          <path d="M169 222 178 236" stroke="#e8e8e8" strokeWidth="2.400" />
        </Icon>
        <T w={52} className="ml-[11px] mt-[2px] text-[16px] text-[#d0d0d0]">Search</T>
      </div>
      <Icon g="k" x={892} y={1030} w={32} h={40} className="ml-[14px] mt-[9px]">
        <rect x="659" y="191" width="41" height="60" rx="3" fill="#707070" />
        <rect x="673" y="168" width="42" height="61" rx="3" fill="#f2f2f2" />
        <path d="M673 191H700V229H673Z" fill="#bdbdbd" />
      </Icon>
      <Icon g="k" x={946} y={1030} w={32} h={40} className="ml-[22px] mt-[9px]">
        <defs><linearGradient id="chat" x1="1" y1="0" x2="0" y2="1"><stop stopColor="#9a7be0" /><stop offset="1" stopColor="#4b53bc" /></linearGradient></defs>
        <path d="M789 168Q815 170 816 209 814 248 789 252L764 252 766 236Q762 225 762 209 763 171 789 168Z" fill="url(#chat)" />
        <rect x="773" y="192" width="20" height="36" rx="4" fill="#fff" />
        <path d="M796 205 805 196V224L796 215Z" fill="#fff" />
      </Icon>
      <div className="ml-[23px] mt-[9px] flex h-[46px] w-[34px] flex-col items-center">
        <Icon g="k" x={1001} y={1030} w={34} h={40}>
          <defs>
            <linearGradient id="e1" x1="0" y1="0" x2="1" y2="0"><stop stopColor="#1f9de0" /><stop offset=".6" stopColor="#35c8c0" /><stop offset="1" stopColor="#6fe05a" /></linearGradient>
            <linearGradient id="e2" x1="0" y1="0" x2="0" y2="1"><stop stopColor="#1b8fe0" /><stop offset="1" stopColor="#0b5cb5" /></linearGradient>
          </defs>
          <path d="M865 206Q868 168 892 165 918 168 920 200 918 224 903 226 893 224 897 214 899 190 884 188 870 188 865 206Z" fill="url(#e1)" />
          <path d="M865 205Q872 184 887 188 880 200 880 216 884 240 903 243 910 243 916 237 906 254 893 255 866 252 864 212Z" fill="url(#e2)" />
          <path d="M880 214Q884 204 891 203 887 224 900 232 910 236 917 231 911 248 900 250 882 242 880 214Z" fill="#114a92" />
        </Icon>
        <span className="h-[4px] w-[8px] rounded-full bg-[#9a9a9a]" />
      </div>
      <Icon g="k" x={1056} y={1027} w={40} h={40} className="ml-[21px] mt-[6px]">
        <path d="M967 196 995 165 1023 196V222H967Z" fill="#0d5cab" />
        <path d="M973 194H1017V225H973Z" fill="#f0f4f8" />
        <path d="M967 198 995 222 1023 198V249L1020 252H970L967 249Z" fill="#35b5f0" />
        <path d="M967 250 1020 205 1023 252H969Z" fill="#1b8fe0" />
        <ellipse cx="1016" cy="178" rx="18" ry="30" fill="#43b1f2" />
        <text x="1011" y="191" fontSize="37" fill="#111" textLength="10" lengthAdjust="spacingAndGlyphs">1</text>
      </Icon>
      <div className="ml-[15px] mt-[9px] flex h-[46px] w-[34px] flex-col items-center">
        <Icon g="k" x={1111} y={1030} w={34} h={40}>
          <path d="M1098 166Q1125 169 1126 209 1123 249 1098 252 1089 252 1083 247L1070 253 1073 232Q1069 220 1070 207 1073 169 1098 166Z" fill="#fff" />
          <path d="M1098 173Q1120 176 1121 209 1118 243 1098 246 1090 245 1084 240L1076 243 1078 229Q1074 220 1075 208 1077 176 1098 173Z" fill="#3fc351" />
          <path d="M1087 190Q1091 186 1093 194L1095 202 1092 208Q1096 219 1103 223L1107 217 1114 223Q1113 232 1106 233 1088 228 1084 203 1084 194 1087 190Z" fill="#fff" />
        </Icon>
        <span className="h-[4px] w-[8px] rounded-full bg-[#9a9a9a]" />
      </div>
      <Icon g="k" x={1167} y={1030} w={32} h={40} className="ml-[22px] mt-[9px]">
        <path d="M1172 174 1174 171H1190L1197 180H1226L1228 184V200H1172Z" fill="#e0a100" />
        <path d="M1172 190H1192L1198 183H1228V247L1226 250H1174L1172 247Z" fill="#ffd04a" />
        <path d="M1182 231 1185 227H1216L1219 231V250H1182Z" fill="#1476c8" />
        <path d="M1188 239H1212" stroke="#0a4d8c" strokeWidth="1.200" />
      </Icon>
      <Icon g="k" x={1221} y={1030} w={34} h={40} className="ml-[22px] mt-[9px]">
        <path d="M1296 250Q1278 241 1278 210 1280 171 1303 169 1326 171 1328 210 1326 243 1307 250" stroke="#0fcaff" strokeWidth="3.600" />
        <path d="M1279 222Q1297 228 1301 241L1298 254Q1282 246 1277 222Z" fill="#0fcaff" />
      </Icon>
      <Icon g="k" x={1277} y={1030} w={32} h={40} className="ml-[22px] mt-[9px]">
        <path d="M1378 165H1434V255H1378Z" fill="#27a9d8" />
        <path d="M1396 180 1390 240 1418 238 1402 225Z" fill="#14315f" />
        <path d="M1396 178H1404V226H1420V235H1396Z" fill="#fff" stroke="#fff" strokeWidth=".8" />
      </Icon>
      <div className="ml-[14px] mt-[4px] flex h-[50px] w-[50px] flex-col items-center rounded-[4px] border border-[#333] bg-[#2a2a2a]">
        <Icon g="k" x={1331} y={1031} w={34} h={38} className="mt-[5px]">
          <path d="M1508 168Q1533 170 1534 209 1532 248 1508 250 1484 247 1483 209 1484 171 1508 168Z" fill="#d35230" />
          <path d="M1509 168Q1533 170 1534 209H1509Z" fill="#ff8f6b" />
          <path d="M1507 168Q1484 171 1483 209H1509V168Z" fill="#ed6c47" />
          <rect x="1480" y="183" width="27" height="51" rx="3" fill="#c43e1c" />
          <text x="1487" y="221" fontSize="36" fontWeight="700" fill="#fff" textLength="14" lengthAdjust="spacingAndGlyphs">P</text>
        </Icon>
        <span className="mt-[1px] h-[4px] w-[20px] rounded-full bg-[#42b0f0]" />
      </div>
      <Icon g="r" x={1514} y={1040} w={18} h={20} className="ml-auto mt-[19px]">
        <path d="M639 459 653 440 667 459" stroke="#fff" strokeWidth="1.700" />
      </Icon>
      <Icon g="r" x={1552} y={1038} w={23} h={22} className="ml-[20px] mt-[17px]">
        <path d="M728 468Q721 462 723 452 727 444 733 445 736 430 747 430 758 431 762 446 769 450 768 460 766 467 762 468Z" fill="#e8e8e8" />
        <path d="M733 445Q736 430 747 430 758 431 761 445L750 452Z" fill="#9a9a9a" />
        <path d="M735 468 760 446Q769 450 768 460 766 467 762 468Z" fill="#fff" />
      </Icon>
      <Icon g="r" x={1592} y={1038} w={23} h={22} className="ml-[17px] mt-[17px]">
        <path d="M820 468Q813 462 815 452 819 444 825 445 828 430 839 430 850 431 854 446 861 450 860 460 858 467 854 468Z" fill="#1490df" />
        <path d="M825 445Q828 430 839 430 850 431 853 445L842 454Z" fill="#0d5fb8" />
        <path d="M823 468 852 447Q861 450 860 460 858 467 854 468Z" fill="#28a8ea" />
      </Icon>
      <div className="ml-[20px] mt-[9px] flex w-[32px] flex-col items-center">
        <T w={29}>ENG</T>
        <T w={15}>IN</T>
      </div>
      <Icon g="r" x={1686} y={1038} w={24} h={22} className="ml-[19px] mt-[17px]">
        <path d="M1035 443Q1056 417 1078 443M1041 452Q1056 432 1072 452M1047 460Q1056 447 1066 460" stroke="#fff" strokeWidth="1.500" />
        <ellipse cx="1056" cy="465" rx="4" ry="5" fill="#fff" />
      </Icon>
      <Icon g="r" x={1716} y={1038} w={24} h={24} className="ml-[6px] mt-[17px]">
        <path d="M1103 441H1110L1120 430V471L1110 460H1103Z" stroke="#fff" strokeWidth="1.300" strokeLinejoin="round" />
        <path d="M1125 441Q1131 450 1125 460M1131 434Q1141 450 1131 467M1138 427Q1152 450 1138 474" stroke="#fff" strokeWidth="1.300" />
      </Icon>
      <Icon g="r" x={1746} y={1038} w={24} h={22} className="ml-[6px] mt-[17px]">
        <rect x="1172" y="431" width="39" height="38" rx="6" stroke="#fff" strokeWidth="1.500" />
        <path d="M1177 438H1206V462H1177Z" fill="#fff" />
        <path d="M1215 443V457" stroke="#fff" strokeWidth="1.800" />
      </Icon>
      <div className="ml-[18px] mt-[9px] flex w-[78px] flex-col items-end">
        <T w={36.5}>03:55</T>
        <T w={78}>19-04-2023</T>
      </div>
      <div className="ml-[9px] mr-[25px] mt-[19px] flex h-[20px] w-[20px] items-center justify-center rounded-full bg-[#43b1f2] text-[12px] font-semibold text-[#111]">
        <T w={11}>11</T>
      </div>
    </div>
  );
}

export default function App() {
  return (
    <div className="flex h-[1080px] w-[1920px] flex-col overflow-hidden bg-[#e6e6e6] font-['Open_Sans','Noto_Sans',sans-serif]">
      <Header />
      <Ribbon />
      <div className="flex h-[797px] shrink-0">
        <Panel />
        <Canvas />
        <Scrollbar />
      </div>
      <StatusBar />
      <Taskbar />
    </div>
  );
}
